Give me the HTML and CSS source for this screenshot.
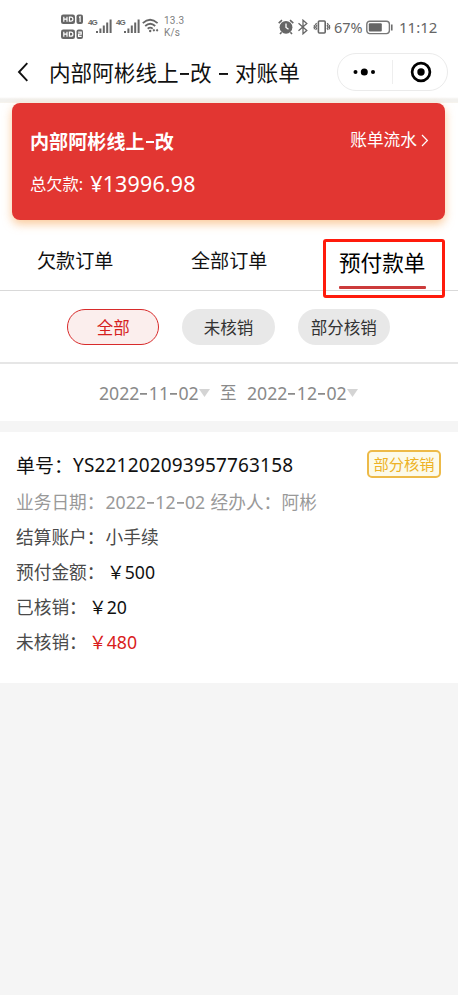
FILE: index.html
```html
<!DOCTYPE html>
<html lang="zh-CN">
<head>
<meta charset="utf-8">
<title>对账单</title>
<link rel="stylesheet" href="styles.css">
</head>
<body>
<header class="status">
  <div class="status-left">
    <svg class="hd" width="24" height="27" viewBox="0 0 24 27">
      <g fill="#666"><rect x="0" y="0.5" width="14" height="9.5" rx="2.2"/><rect x="15.5" y="0.5" width="6.5" height="9.5" rx="2"/><rect x="0" y="15.5" width="14" height="9.5" rx="2.2"/><rect x="15.5" y="15.5" width="6.5" height="9.5" rx="2"/></g>
      <g fill="none" stroke="#fff" stroke-width="1.2"><path d="M2.8 2.7v5M6 2.7v5M2.8 5.2H6M8.4 3.2h1.5q2 0 2 2t-2 2H8.4zM18 3.4l1.1-.6v5.1M2.8 17.7v5M6 17.7v5M2.8 20.2H6M8.4 18.2h1.5q2 0 2 2t-2 2H8.4zM17.2 18.2h3v2h-2.6v2.2h3"/></g>
    </svg>
    <div class="signal"><span class="net">4G</span><svg width="16" height="15" viewBox="0 0 16 15" fill="#666"><path d="M0 12h2v2H0zM3.4 9.5h2V14h-2zM6.8 6.5h2V14h-2zM10.2 3.5h2V14h-2zM13.6 .5h2V14h-2z"/></svg></div>
    <div class="signal"><span class="net">4G</span><svg width="16" height="15" viewBox="0 0 16 15" fill="#666"><path d="M0 12h2v2H0zM3.4 9.5h2V14h-2zM6.8 6.5h2V14h-2zM10.2 3.5h2V14h-2zM13.6 .5h2V14h-2z"/></svg></div>
    <svg class="wifi" width="18" height="16" viewBox="0 0 18 16" fill="none" stroke="#666" stroke-width="1.8"><path d="M.8 5.1q7.2-6.7 14.8 0M3.2 8q5-4.5 10 0M5.7 10.7q2.5-2.1 5 0"/><circle cx="8.2" cy="13" r="1.2" fill="#666" stroke="none"/><path d="m10.6 12.3 1.3-1.5 1.3 1.5-1.3 1.5zM13.8 12.3l1.3-1.5 1.3 1.5-1.3 1.5z" fill="#666" stroke="none"/></svg>
    <div class="speed">13.3<br>K/s</div>
  </div>
  <div class="status-right">
    <svg width="16" height="16" viewBox="0 0 16 16"><circle cx="8" cy="8.3" r="6.4" fill="#666"/><path d="M.7 4.2 4 1.2M12 1.2l3.3 3M3.6 13.2 2 15M12.4 13.2 14 15" stroke="#666" stroke-width="1.6"/><path d="M8 4.5v4l2.5 1.8" fill="none" stroke="#fff" stroke-width="1.3"/></svg>
    <svg class="bt" width="10" height="16" viewBox="0 0 10 16" fill="none" stroke="#666" stroke-width="1.3"><path d="M.5 4.3 8.8 11.5 5 14.8V1.2l3.8 3.3L.5 11.7"/></svg>
    <svg class="vib" width="18" height="16" viewBox="0 0 18 16" fill="none" stroke="#666" stroke-width="1.6"><rect x="5.4" y="2" width="6.8" height="12" rx="1"/><path d="M3.6 4.2 2.6 5.5l1 1.3-1 1.4 1 1.3-1 1.5M1 6l.6 1L1 8.2l.6 1-.6 1M14.2 4.2l1 1.3-1 1.3 1 1.4-1 1.3 1 1.5M16.8 6l-.6 1 .6 1.2-.6 1 .6 1" stroke-width="1.2"/></svg>
    <span class="pct">67%</span>
    <svg class="bat" width="28" height="15" viewBox="0 0 28 15"><rect x=".8" y="1.2" width="22.6" height="12.4" rx="3" fill="none" stroke="#777" stroke-width="1.4"/><rect x="2.8" y="3.2" width="13" height="8.4" rx="1" fill="#666"/><path d="M25.8 4.5v6" stroke="#666" stroke-width="1.5"/></svg>
    <span class="clock">11:12</span>
  </div>
</header>
<nav class="nav">
  <svg class="back" width="12" height="20" viewBox="0 0 12 20" fill="none" stroke="#111" stroke-width="1.9"><path d="M10.3 1.2 2 10l8.3 8.8"/></svg>
  <h1>内部阿彬线上<i class="dash"></i>改<i class="dash wide"></i>对账单</h1>
  <div class="capsule">
    <svg width="110" height="36" viewBox="0 0 110 36"><circle cx="17.5" cy="18" r="2"/><circle cx="26.3" cy="18" r="3.5"/><circle cx="35" cy="18" r="2"/><path d="M54.5 6v24" stroke="#eee"/><circle cx="83" cy="18" r="8.9" fill="none" stroke="#000" stroke-width="2.7"/><circle cx="83" cy="18" r="3.7"/></svg>
  </div>
</nav>
<main>
  <section class="top">
    <div class="account">
      <div class="account-head"><h2>内部阿彬线上<i class="dash"></i>改</h2><a class="flow">账单流水<svg width="8" height="13" viewBox="0 0 8 13" fill="none" stroke="#fff" stroke-width="1.2"><path d="m1 1 5.4 5.5L1 12"/></svg></a></div>
      <p class="debt">总欠款: <span>¥13996.98</span></p>
    </div>
    <div class="tabs">
      <a>欠款订单</a><a>全部订单</a><a class="active">预付款单<span class="marker"></span></a>
    </div>
  </section>
  <div class="filters"><a class="on">全部</a><a>未核销</a><a>部分核销</a></div>
  <div class="range">
    <span class="date">2022<i class="dash"></i>11<i class="dash"></i>02</span><b class="caret"></b><span class="to">至</span><span class="date">2022<i class="dash"></i>12<i class="dash"></i>02</span><b class="caret"></b>
  </div>
  <article class="order">
    <div class="order-head"><span>单号：</span><span class="no">YS221202093957763158</span><span class="tag">部分核销</span></div>
    <p class="muted"><span class="label">业务日期：</span><span class="odate">2022<i class="dash"></i>12<i class="dash"></i>02</span><span class="by">经办人：</span><span>阿彬</span></p>
    <p><span class="label">结算账户：</span>小手续</p>
    <p><span class="label">预付金额：</span><span class="money">￥<em>500</em></span></p>
    <p><span class="label short">已核销：</span><span class="money">￥<em>20</em></span></p>
    <p><span class="label short">未核销：</span><span class="money red">￥<em>480</em></span></p>
  </article>
</main>
</body>
</html>
```
FILE: styles.css
```css
* { box-sizing: border-box; }
body { margin: 0; width: 458px; min-height: 995px; background: #f5f5f5; color: #111; font-family: "Noto Sans", "Noto Sans CJK SC", sans-serif; overflow-x: hidden; }
h1, h2, p { margin: 0; font-weight: 400; }
svg { display: block; flex: none; }
a, span { white-space: nowrap; }
.dash { display: inline-block; width: .53em; height: .085em; background: linear-gradient(currentColor, currentColor) center / .42em 100% no-repeat; vertical-align: .29em; }
.dash.wide { width: 1.08em; }

.status { height: 50px; display: flex; justify-content: space-between; padding: 0 20px 0 61px; background: #fff; color: #666; }
.status-left, .status-right { display: flex; align-items: flex-start; }
.hd { margin-top: 14px; }
.signal { display: flex; margin: 19px 0 0 3px; width: 25px; }
.signal .net { width: 8px; font: bold 8px/8px "Liberation Sans", sans-serif; letter-spacing: -.9px; }
.wifi { margin: 18px 0 0 1px; }
.speed { margin: 15px 0 0 4px; color: #808080; font: 10px/12px Roboto, sans-serif; letter-spacing: .2px; }
.status-right { padding-top: 19px; }
.bt { margin-left: 4px; }
.vib { margin-left: 5px; }
.pct { width: 31px; margin-left: 3px; font-size: 14.5px; line-height: 16px; letter-spacing: -.1px; }
.bat { margin: 1px 0 0 1px; }
.clock { width: 39px; margin-left: 5px; font-size: 15px; line-height: 16px; }

.nav { height: 53px; padding: 3px 10px 0 17px; display: flex; align-items: flex-start; background: linear-gradient(#fff 0 47px, #f2f1ee 49px 52px, #faf6ee 53px); }
.back { margin-top: 9px; }
.nav h1 { margin-left: 20px; font-size: 21.6px; line-height: 39px; flex: 1; white-space: nowrap; }
.capsule { width: 111px; height: 38px; border: 1px solid #ebebeb; border-radius: 19px; background: #fff; }

.top { height: 188px; background: #fff; border-bottom: 1px solid #d9d9d9; padding: 0 13px 0 12px; }
.account { height: 117px; border-radius: 8px; background: #e23632; color: #fff; padding: 27px 16px 0 18px; box-shadow: 0 4px 10px rgba(246, 166, 88, .6); }
.account-head { display: flex; justify-content: space-between; }
.account h2 { font-size: 19.1px; font-weight: 700; line-height: 25px; }
.account h2 .dash { height: 2px; }
.flow { display: flex; align-items: center; gap: 4px; height: 20px; font-size: 16.7px; line-height: 20px; }
.debt { display: flex; align-items: center; gap: 7px; margin-top: 12px; height: 32px; font-size: 16.3px; }
.debt span { font-size: 21.4px; letter-spacing: .2px; }
.tabs { display: flex; height: 70px; padding-left: 25px; font-size: 19.1px; line-height: 82px; }
.tabs a { width: 154px; }
.tabs .active { position: relative; width: 87px; margin-left: -6px; font-size: 21.6px; line-height: 86px; color: #000; }
.active::after { content: ""; position: absolute; left: 0; top: 66px; width: 87px; height: 3px; border-radius: 1px; background: #cc3b3b; }
.marker { position: absolute; left: -16px; top: 19px; width: 122px; height: 59px; border: 3px solid #ff1b0c; border-radius: 3px; z-index: 1; }

.filters { height: 73px; padding: 18px 0 0 67px; display: flex; gap: 23px; background: #fff; border-bottom: 2px solid #e6e6e6; }
.filters a { width: 92.3px; height: 36px; border-radius: 18px; background: #e8e8e8; color: #333; font-size: 16.5px; line-height: 37px; text-align: center; }
.filters .on { background: #fbeeed; color: #d61f1f; border: 1.5px solid #d82b2b; line-height: 35px; }
.range { height: 57px; padding-left: 99px; display: flex; line-height: 58px; background: #fff; color: #8a8a8a; font-size: 17.7px; }
.range .date { width: 100px; }
.to { margin: 0 11px 0 10px; width: 16px; font-size: 16.5px; }
.caret { margin-top: 25px; width: 11px; height: 8px; background: #d4d4d4; clip-path: polygon(0 0, 100% 0, 50% 100%); }

.order { height: 251px; margin-top: 11px; padding: 15px 17px 0 16px; background: #fff; color: #4a4a4a; font-size: 17.7px; }
.order-head { display: flex; align-items: center; height: 35px; margin-bottom: 3px; color: #111; font-size: 19px; }
.no { letter-spacing: .17px; }
.tag { margin: -1px 0 0 auto; width: 74px; height: 28px; border: 2px solid #edba48; border-radius: 5px; background: #fcfae9; color: #edb225; font-size: 15.3px; line-height: 25px; text-align: center; }
.order p { display: flex; height: 35px; line-height: 35px; }
.order .label { width: 89.5px; flex: none; }
.order .short { width: 71.5px; }
.muted { color: #999; }
.odate { width: 105px; }
.by { width: 71px; }
.money { margin-left: 1.5px; color: #111; }
.money em { font-style: normal; }
.money.red { color: #d91c1c; }
```
